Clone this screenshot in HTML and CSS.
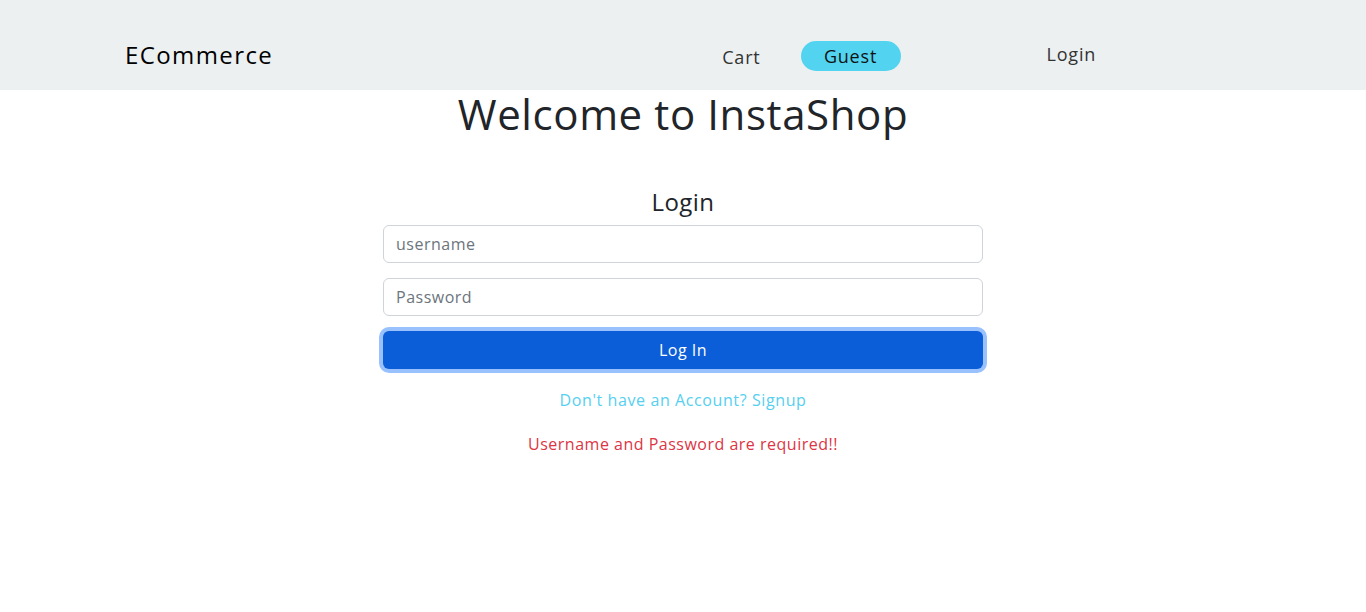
FILE: index.html
```html
<!DOCTYPE html>
<html lang="en">
<head>
<meta charset="utf-8">
<title>InstaShop</title>
<link rel="stylesheet" href="styles.css">
</head>
<body>
<header class="navbar">
  <div class="nav-inner">
    <a class="brand" href="#">ECommerce</a>
    <nav class="nav-links">
      <a class="nav-link cart" href="#">Cart</a>
      <span class="guest">Guest</span>
      <a class="nav-link login-link" href="#">Login</a>
    </nav>
  </div>
</header>
<main class="main">
  <h1 class="title">Welcome to InstaShop</h1>
  <form class="login-form">
    <h4 class="form-title">Login</h4>
    <input class="field" type="text" placeholder="username">
    <input class="field" type="password" placeholder="Password">
    <button class="btn" type="button">Log In</button>
    <a class="signup" href="#">Don't have an Account? Signup</a>
    <p class="error">Username and Password are required!!</p>
  </form>
</main>
</body>
</html>
```
FILE: styles.css
```css
* { box-sizing: border-box; }
body {
  margin: 0;
  font-family: "Open Sans", "Noto Sans", sans-serif;
  color: #212529;
  background: #fff;
}
a { text-decoration: none; }
.navbar {
  background: #ecf0f1;
  height: 90px;
}
.nav-inner {
  width: 1140px;
  margin: 0 auto;
  padding: 0 12px;
  height: 100%;
  display: flex;
  align-items: center;
}
.brand {
  color: #000;
  font-size: 24px;
  letter-spacing: 1.4px;
  margin-top: 20px;
  line-height: 30px;
  height: 30px;
}
.nav-links {
  display: flex;
  align-items: center;
  margin-left: 449px;
  margin-top: 22px;
}
.nav-link {
  color: #333;
  font-size: 18px;
  letter-spacing: 0.8px;
}
.cart { margin-top: 2px; }
.guest {
  margin-left: 40px;
  width: 100px;
  height: 30px;
  border-radius: 15px;
  background: #52d4f0;
  color: #111;
  font-size: 18px;
  letter-spacing: 0.8px;
  display: flex;
  align-items: center;
  justify-content: center;
}
.login-link { margin-left: 146px; margin-top: -4px; }
.main {
  display: flex;
  flex-direction: column;
  align-items: center;
}
.title {
  margin: 0;
  font-weight: 400;
  font-size: 42px;
  letter-spacing: 0.6px;
  line-height: 48px;
}
.login-form {
  width: 600px;
  display: flex;
  flex-direction: column;
  align-items: center;
  margin-top: 49px;
}
.form-title {
  margin: 0 0 8px;
  font-weight: 400;
  font-size: 24px;
  letter-spacing: 0.4px;
  line-height: 30px;
}
.field {
  width: 100%;
  height: 38px;
  border: 1px solid #ced4da;
  border-radius: 6px;
  padding: 0 12px;
  font-family: inherit;
  font-size: 16px;
  letter-spacing: 0.5px;
  color: #212529;
  margin-bottom: 15px;
}
.field::placeholder { color: #6c757d; }
.btn {
  width: 100%;
  height: 38px;
  border: none;
  border-radius: 6px;
  background: #0b5ed7;
  color: #fff;
  font-family: inherit;
  font-size: 16px;
  letter-spacing: 0.5px;
  box-shadow: 0 0 0 4px #98c1fe;
}
.signup {
  margin-top: 19px;
  color: #56cff0;
  font-size: 16px;
  letter-spacing: 0.6px;
  line-height: 24px;
}
.error {
  margin: 20px 0 0;
  color: #dc3545;
  font-size: 16px;
  letter-spacing: 0.5px;
  line-height: 24px;
}
```
